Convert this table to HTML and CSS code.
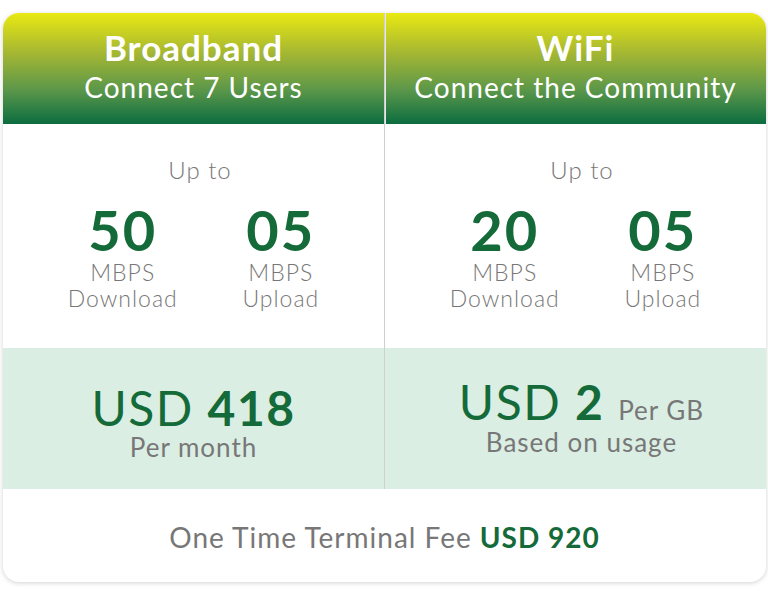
FILE: index.html
```html
<!DOCTYPE html>
<html>
<head>
<meta charset="utf-8">
<link rel="stylesheet" href="styles.css">
</head>
<body>
<div class="card">
  <div class="plans">
    <div class="plan">
      <div class="head">
        <div class="title">Broadband</div>
        <div class="subtitle">Connect 7 Users</div>
      </div>
      <div class="speeds">
        <div class="upto">Up to</div>
        <div class="rates">
          <div class="rate"><div class="num">50</div><div class="unit">MBPS</div><div class="unit">Download</div></div>
          <div class="rate"><div class="num">05</div><div class="unit">MBPS</div><div class="unit">Upload</div></div>
        </div>
      </div>
      <div class="price price-left">
        <div class="amount">USD <b>418</b></div>
        <div class="note">Per month</div>
      </div>
    </div>
    <div class="plan plan-right">
      <div class="head">
        <div class="title">WiFi</div>
        <div class="subtitle">Connect the Community</div>
      </div>
      <div class="speeds">
        <div class="upto">Up to</div>
        <div class="rates">
          <div class="rate"><div class="num">20</div><div class="unit">MBPS</div><div class="unit">Download</div></div>
          <div class="rate"><div class="num">05</div><div class="unit">MBPS</div><div class="unit">Upload</div></div>
        </div>
      </div>
      <div class="price price-right">
        <div class="amount">USD <b>2</b> <span class="per">Per GB</span></div>
        <div class="note">Based on usage</div>
      </div>
    </div>
  </div>
  <div class="footer">One Time Terminal Fee <b>USD 920</b></div>
</div>
</body>
</html>
```
FILE: styles.css
```css
html, body {
  margin: 0;
  padding: 0;
  background: #ffffff;
}
body {
  font-family: Lato, "Noto Sans", sans-serif;
  color: #777777;
  letter-spacing: 1px;
}
.card {
  margin: 13px 2px 14px 3px;
  width: 763px;
  border-radius: 16px;
  overflow: hidden;
  background: #ffffff;
  box-shadow: 0 1px 5px rgba(0, 0, 0, 0.18);
}
.plans {
  display: grid;
  grid-template-columns: 381px 382px;
}
.plan {
  display: flex;
  flex-direction: column;
}
.plan-right {
  border-left: 1px solid #cfcfcf;
}
.head {
  height: 111px;
  display: flex;
  flex-direction: column;
  align-items: center;
  justify-content: center;
  background: linear-gradient(to bottom, #e9e912 0%, #a7b832 35%, #5a964a 70%, #0b6d40 100%);
  color: #ffffff;
  padding-bottom: 4px;
  box-sizing: border-box;
}
.plan-right .head {
  box-shadow: inset 1px 0 0 #e6e6e6;
}
.title {
  font-size: 35px;
  font-weight: 700;
  line-height: 40px;
  letter-spacing: 1px;
}
.subtitle {
  font-size: 28px;
  font-weight: 400;
  line-height: 40px;
}
.speeds {
  height: 224px;
  box-sizing: border-box;
  padding-top: 31px;
  text-align: center;
}
.upto {
  font-size: 24px;
  font-weight: 300;
  line-height: 30px;
  padding-left: 13px;
}
.rates {
  margin-top: 17px;
  display: flex;
  justify-content: space-evenly;
}
.rate {
  display: flex;
  flex-direction: column;
  align-items: center;
}
.num {
  font-size: 56px;
  font-weight: 700;
  color: #146a38;
  line-height: 56px;
  margin-bottom: 1px;
  letter-spacing: 2px;
}
.unit {
  font-size: 23px;
  font-weight: 300;
  line-height: 26px;
}
.price {
  height: 141px;
  box-sizing: border-box;
  background: #dbeee3;
  text-align: center;
}
.price-left {
  padding-top: 36px;
}
.price-right {
  padding-top: 30px;
  padding-left: 12px;
}
.amount {
  font-size: 48px;
  font-weight: 400;
  color: #146a38;
  line-height: 48px;
  letter-spacing: 1.5px;
}
.amount b {
  font-weight: 700;
}
.per {
  font-size: 26px;
  color: #777777;
  letter-spacing: 1px;
}
.note {
  font-size: 26px;
  line-height: 30px;
}
.price-right .note {
  margin-top: -7px;
}
.footer {
  height: 93px;
  display: flex;
  align-items: center;
  justify-content: center;
  font-size: 28px;
  padding-top: 2px;
  box-sizing: border-box;
}
.footer b {
  color: #146a38;
  font-weight: 700;
  margin-left: 8px;
}
```
